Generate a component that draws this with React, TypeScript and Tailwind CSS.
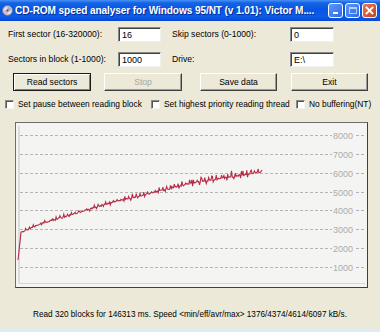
import React from "react";

const font = { fontFamily: '"Liberation Sans", Arial, sans-serif' };

// block index -> speed (kB/s) control points read off the curve
const knots: [number, number][] = [
  [0, 1376],
  [4, 2850],
  [33, 3340],
  [121, 4400],
  [230, 5460],
  [320, 6045],
];

const rnd = (i: number) => {
  const s = Math.sin(i * 12.9898 + 4.1) * 43758.5453;
  return s - Math.floor(s);
};

const speedAt = (i: number) => {
  for (let k = 1; k < knots.length; k++) {
    const [x0, y0] = knots[k - 1];
    const [x1, y1] = knots[k];
    if (i <= x1) return y0 + ((i - x0) / (x1 - x0)) * (y1 - y0);
  }
  return knots[knots.length - 1][1];
};

// chart svg origin is page (16,123)
const yOf = (v: number) => 162.9 - v * 0.018857;

const buildPath = () => {
  const pts: string[] = [];
  for (let i = 0; i <= 320; i++) {
    const x = 2 + i * (244 / 320);
    let y = yOf(speedAt(i));
    if (i > 6) {
      const amp = 1 + (i / 320) * 2.6;
      y += (rnd(i) - 0.5) * 1.4;
      if (i % 5 === 0) y -= amp * (0.5 + rnd(i + 99));
      if (i % 9 === 4) y += amp * 0.8;
      if (i > 200 && i % 13 === 7) y -= amp * 1.2;
    }
    pts.push(`${x.toFixed(1)},${y.toFixed(1)}`);
  }
  return "M" + pts.join(" L");
};

const linePath = buildPath();
const levels = [8000, 7000, 6000, 5000, 4000, 3000, 2000, 1000];

function Chart() {
  return (
    <div className="ml-[15px] mt-[13px] w-[353px] h-[166px] border border-t-[#6d6d6d] border-l-[#6d6d6d] border-r-[#3f3f3f] border-b-[#3f3f3f] bg-[#f4f4f3]">
      <svg width="351" height="164" className="block">
        <line x1="3" y1="3" x2="3" y2="160" stroke="#c4c4c4" strokeWidth="1" />
        <line x1="3" y1="160.5" x2="349" y2="160.5" stroke="#d6d6d6" strokeWidth="1" />
        {levels.map((v) => {
          const y = Math.round(yOf(v)) + 0.5;
          return (
            <g key={v}>
              <line x1="4" y1={y} x2="316" y2={y} stroke="#b4b4b4" strokeDasharray="3 2" />
              <text x="317" y={y + 3} fontSize="9" fill="#acacac" style={font}>
                {v}
              </text>
              <line x1="340" y1={y} x2="348" y2={y} stroke="#b4b4b4" strokeDasharray="3 2" />
            </g>
          );
        })}
        <path d={linePath} fill="none" stroke="#b42c45" strokeWidth="1.1" strokeLinejoin="miter" />
      </svg>
    </div>
  );
}

function Field({ value, className = "" }: { value: string; className?: string }) {
  return (
    <div
      className={`h-[15px] bg-white border border-t-[#8a8a8a] border-l-[#8a8a8a] border-r-[#f0f0f0] border-b-[#f0f0f0] shadow-[inset_1px_1px_0_#404040] pl-[3px] pt-[2px] text-[9px] leading-[10px] text-black ${className}`}
    >
      {value}
    </div>
  );
}

function Button({
  label,
  className = "",
  primary = false,
  disabled = false,
}: {
  label: string;
  className?: string;
  primary?: boolean;
  disabled?: boolean;
}) {
  return (
    <div
      className={`h-[18px] flex items-center justify-center bg-[#ece9d8] ${
        primary
          ? "border border-[#1a1a1a] shadow-[inset_1px_1px_0_#fff,inset_-1px_-1px_0_#808080]"
          : "border border-t-[#fff] border-l-[#fff] border-r-[#404040] border-b-[#404040] shadow-[inset_-1px_-1px_0_#9a9a9a]"
      } ${disabled ? "text-[#a6a6a6]" : "text-black"} text-[8.6px] ${className}`}
    >
      {label}
    </div>
  );
}

function Check({ label, className = "" }: { label: string; className?: string }) {
  return (
    <div className={`flex items-center gap-[4px] ${className}`}>
      <div className="w-[9px] h-[9px] bg-white border border-t-[#8a8a8a] border-l-[#8a8a8a] border-r-[#f4f4f4] border-b-[#f4f4f4] shadow-[inset_1px_1px_0_#555]" />
      <span className="text-[8.4px] leading-[10px] text-black whitespace-nowrap">{label}</span>
    </div>
  );
}

export default function App() {
  return (
    <div className="w-[380px] h-[332px] bg-[#ece9d8] flex flex-col overflow-hidden" style={font}>
      {/* title bar */}
      <div className="h-[21px] shrink-0 flex items-center bg-[linear-gradient(to_bottom,#4a91f6_0%,#1463e6_14%,#0656e2_45%,#0a5ce9_80%,#0846d0_100%)]">
        <svg width="11" height="11" viewBox="0 0 22 22" className="ml-[2px]">
          <circle cx="11" cy="11" r="10" fill="#c9ccd6" stroke="#6d7486" strokeWidth="1.5" />
          <circle cx="11" cy="11" r="7" fill="#dfe3f0" />
          <path d="M11 4a7 7 0 0 1 7 7h-4a3 3 0 0 0-3-3z" fill="#8aa8e8" />
          <path d="M11 18a7 7 0 0 1-7-7h4a3 3 0 0 0 3 3z" fill="#e7a6c6" />
          <circle cx="11" cy="11" r="2.5" fill="#555b6a" />
        </svg>
        <span className="ml-[2px] text-white font-bold text-[10.1px] tracking-[-0.1px] whitespace-nowrap [text-shadow:1px_1px_0_#0a2a90]">
          CD-ROM speed analyser for Windows 95/NT (v 1.01): Victor M....
        </span>
        <div className="ml-auto mr-[3px] flex gap-[2px]">
          <div className="w-[15px] h-[15px] rounded-[3px] border border-white bg-[linear-gradient(135deg,#5f98f8,#2a6ae8)] flex items-end justify-center pb-[3px]">
            <div className="w-[5px] h-[2px] bg-white" />
          </div>
          <div className="w-[15px] h-[15px] rounded-[3px] border border-white bg-[linear-gradient(135deg,#5f98f8,#2a6ae8)] flex items-center justify-center">
            <div className="w-[8px] h-[7px] border border-white border-t-2 opacity-60" />
          </div>
          <div className="w-[15px] h-[15px] rounded-[3px] border border-white bg-[linear-gradient(135deg,#e8795a,#c8401a)] flex items-center justify-center">
            <svg width="9" height="9" viewBox="0 0 9 9">
              <path d="M1.5 1.5l6 6M7.5 1.5l-6 6" stroke="#fff" strokeWidth="1.8" strokeLinecap="square" />
            </svg>
          </div>
        </div>
      </div>

      {/* parameters */}
      <div className="mt-[6px] h-[15px] flex items-center text-[8.6px] text-black">
        <span className="w-[118px] pl-[8px]">First sector (16-320000):</span>
        <Field value="16" className="w-[43px]" />
        <span className="ml-[11px] w-[118px]">Skip sectors (0-1000):</span>
        <Field value="0" className="w-[44px]" />
      </div>
      <div className="mt-[10px] h-[15px] flex items-center text-[8.6px] text-black">
        <span className="w-[118px] pl-[8px]">Sectors in block (1-1000):</span>
        <Field value="1000" className="w-[43px]" />
        <span className="ml-[11px] w-[118px]">Drive:</span>
        <Field value="E:\" className="w-[44px]" />
      </div>

      {/* buttons */}
      <div className="mt-[6px] flex">
        <Button label="Read sectors" primary className="ml-[13px] w-[78px]" />
        <Button label="Stop" disabled className="ml-[13px] w-[78px]" />
        <Button label="Save data" className="ml-[18px] w-[77px]" />
        <Button label="Exit" className="ml-[14px] w-[77px]" />
      </div>

      {/* options */}
      <div className="mt-[8px] flex">
        <Check label="Set pause between reading block" className="ml-[5px] w-[146px]" />
        <Check label="Set highest priority reading thread" className="w-[145px]" />
        <Check label="No buffering(NT)" />
      </div>

      <Chart />

      <div className="mt-[21px] text-center text-[8.2px] text-black whitespace-nowrap">
        Read 320 blocks for 146313 ms. Speed &lt;min/eff/avr/max&gt; 1376/4374/4614/6097 kB/s.
      </div>

      <div className="mt-auto h-[5px] bg-[#e3eaee]" />
    </div>
  );
}
